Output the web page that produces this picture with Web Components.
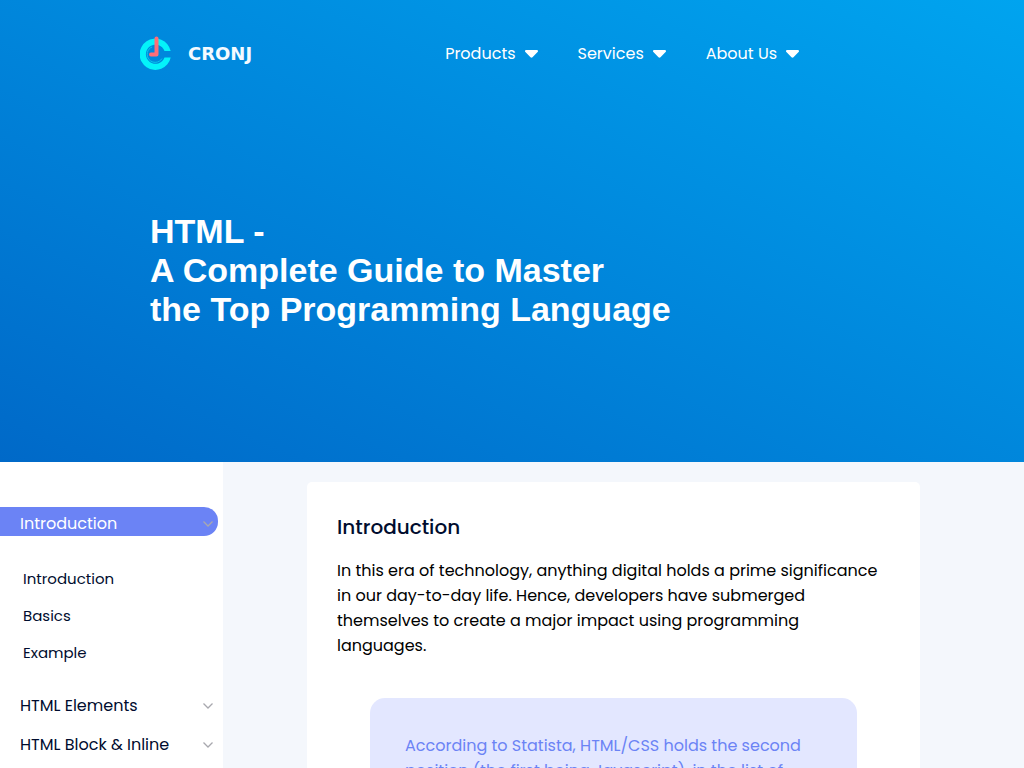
<!DOCTYPE html>
<html lang="en">
<head>
<meta charset="utf-8">
<meta name="viewport" content="width=device-width, initial-scale=1">
<title>HTML - A Complete Guide</title>
<style>
body { margin: 0; background: #f4f7fc; color: #000c2e; font: 16px/25px Poppins, Inter, sans-serif; }
</style>
</head>
<body>
<guide-hero>
  <nav-item slot="nav">Products</nav-item>
  <nav-item slot="nav">Services</nav-item>
  <nav-item slot="nav">About Us</nav-item>
  HTML -<br>A Complete Guide to Master<br>the Top Programming Language
</guide-hero>
<guide-layout>
  <topic-list slot="side">
    <topic-group label="Introduction" active>
      <topic-link>Introduction</topic-link>
      <topic-link>Basics</topic-link>
      <topic-link>Example</topic-link>
    </topic-group>
    <topic-group label="HTML Elements"></topic-group>
    <topic-group label="HTML Block &amp; Inline"></topic-group>
  </topic-list>
  <article-card heading="Introduction">
    In this era of technology, anything digital holds a prime significance in our day-to-day life. Hence, developers have submerged themselves to create a major impact using programming languages.
    <pull-quote slot="quote">According to Statista, HTML/CSS holds the second position (the first being Javascript), in the list of</pull-quote>
  </article-card>
</guide-layout>
<script>
const define = (name, html) => customElements.define(name, class extends HTMLElement {
  constructor() {
    super();
    this.attachShadow({ mode: 'open' }).innerHTML = html;
  }
  connectedCallback() {
    for (const key of ['label', 'heading']) {
      const target = this.shadowRoot.querySelector('[data-' + key + ']');
      if (target) target.textContent = this.getAttribute(key);
    }
  }
});

define('brand-logo', `
<style>
:host { display: block; }
a { display: flex; align-items: center; gap: 16px; color: #f4faff; text-decoration: none; font: bold 18px/24px "DejaVu Sans", sans-serif; }
svg { display: block; flex: none; }
</style>
<a href="#"><svg width="32" height="36" viewBox="0 0 32 36" fill="none" aria-hidden="true">
<path d="M30.700 15A15.700 15.700 0 1 0 30.700 21.500H24.500A9.600 9.600 0 1 1 24.500 15Z" fill="#04f3fa"/>
<path d="M12 11A8 8 0 1 0 22 22.500" stroke="#07c9ee" stroke-width="1"/>
<path d="M16.500 2.500v16h-5.500" stroke="#ff6d78" stroke-width="4" stroke-linecap="round" stroke-linejoin="round"/>
</svg><span>CRONJ</span></a>`);

define('nav-item', `
<style>
:host { display: block; }
button { display: flex; align-items: center; gap: 9px; padding: 0; border: 0; background: none; color: #fff; font: inherit; white-space: nowrap; cursor: pointer; }
</style>
<button type="button"><slot></slot><svg width="13" height="8" viewBox="0 0 13 8" aria-hidden="true"><path d="M1.3 0h10.4c1.2 0 1.7 1.2.9 2L7.5 7.2c-.6.6-1.4.6-2 0L.4 2C-.4 1.200.1 0 1.300 0z" fill="#fff"/></svg></button>`);

define('guide-hero', `
<style>
:host { display: block; min-height: 462px; background: linear-gradient(to top right, #0069c8, #00a4ef); color: #fff; }
header { display: flex; align-items: center; padding: 33px 140px 0; gap: 193px; height: 41px; }
nav { display: flex; gap: 40px; }
h1 { margin: 138px 150px 0; font: bold 34px/39px "Liberation Sans", Arial, sans-serif; }
</style>
<header><brand-logo></brand-logo><nav><slot name="nav"></slot></nav></header>
<h1><slot></slot></h1>`);

define('guide-layout', `
<style>
:host { display: grid; grid-template-columns: 223px minmax(0, 1fr); }
aside { background: #fff; }
main { padding: 20px 13% 20px 84px; }
</style>
<aside><slot name="side"></slot></aside><main><slot></slot></main>`);

define('topic-list', `
<style>
:host { display: block; padding: 45px 0 40px; }
nav { display: grid; gap: 10px; }
</style>
<nav><slot></slot></nav>`);

define('topic-group', `
<style>
:host { display: block; margin-right: 5px; }
button { display: flex; align-items: center; justify-content: space-between; width: 100%; min-height: 29px; padding: 4px 5px 0 20px; border: 0; border-radius: 0 14px 14px 0; background: none; color: inherit; font: inherit; text-align: left; cursor: pointer; }
:host([active]) button { background: #6b83f5; color: #fff; }
:host([active]) .items { padding: 30px 0 14px 23px; }
.items { display: grid; gap: 12px; }
</style>
<button type="button"><span data-label></span><svg width="10" height="6" viewBox="0 0 10 6" fill="none" aria-hidden="true"><path d="M.5.5 5 5 9.500.5" stroke="#a8a8ae" stroke-width="1.300"/></svg></button>
<div class="items"><slot></slot></div>`);

define('topic-link', `
<style>
:host { display: block; }
a { display: block; color: inherit; text-decoration: none; font-size: 15px; }
</style>
<a href="#"><slot></slot></a>`);

define('article-card', `
<style>
:host { display: block; padding: 30px; border-radius: 5px; background: #fff; }
h2 { margin: 0; font-size: 20px; font-weight: 500; line-height: 30px; }
p { margin: 16px 0 40px; color: #000; }
</style>
<h2 data-heading></h2><p><slot></slot></p><slot name="quote"></slot>`);

define('pull-quote', `
<style>
:host { display: block; margin: 0 33px; padding: 35px; border-radius: 15px; background: #e3e7ff; color: #6b83f5; }
blockquote { margin: 0; }
</style>
<blockquote><slot></slot></blockquote>`);
</script>
</body>
</html>
